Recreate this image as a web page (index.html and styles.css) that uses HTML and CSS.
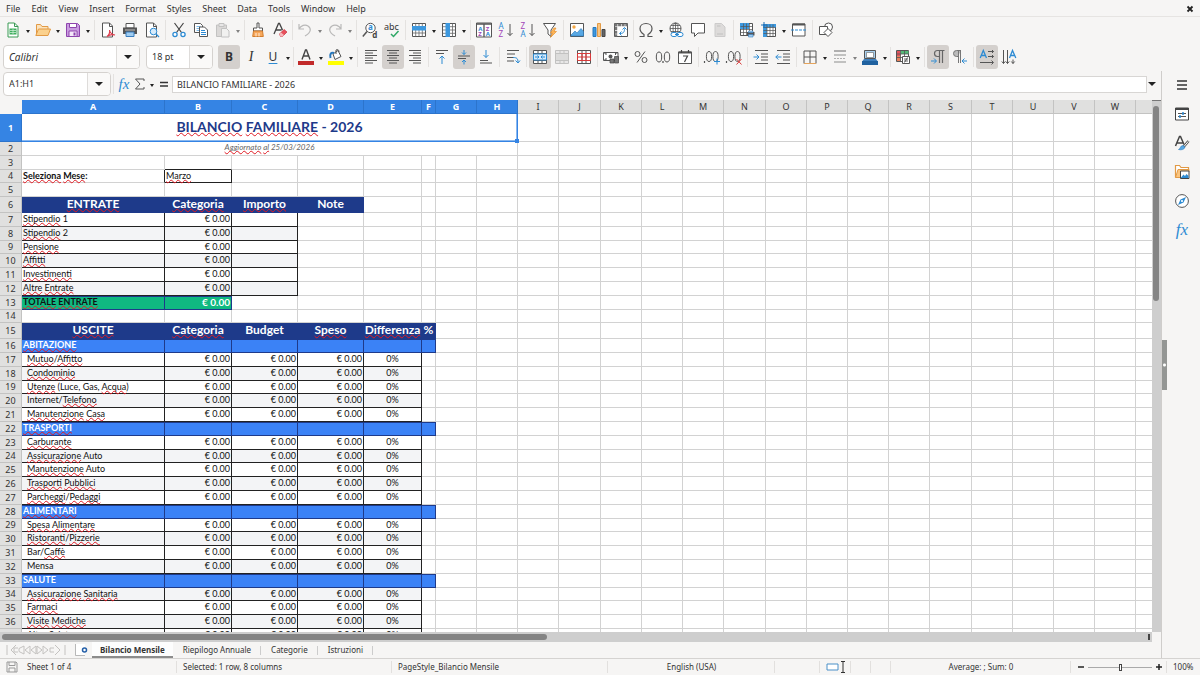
FILE: index.html
```html
<!DOCTYPE html>
<html lang="en">
<head>
<meta charset="utf-8">
<title>Bilancio Familiare</title>
<link rel="stylesheet" href="styles.css">
</head>
<body>
<nav class="menubar">
  <button>File</button><button>Edit</button><button>View</button><button>Insert</button><button>Format</button><button>Styles</button><button>Sheet</button><button>Data</button><button>Tools</button><button>Window</button><button>Help</button>
  <button class="close" aria-label="Close"><svg class="close-icon" viewBox="0 0 8 8"><path d="M1.500 1.500l5 5M6.500 1.500l-5 5" stroke="#222" stroke-width="1.800"/></svg></button>
</nav>

<div class="toolbar" role="toolbar" aria-label="Standard">
  <button class="tool" aria-label="New"><svg viewBox="0 0 16 16"><path d="M3 1h6.500l3.500 3.500V15H3z" fill="#fff" stroke="#3a9a55"/><path d="M9.500 1v3.500H13" fill="none" stroke="#3a9a55"/><path d="M4.500 6.500h7v6h-7z" fill="#3fae5f"/><path d="M5 8.500h6M5 10.500h6M8 7v5" stroke="#d9f2df" stroke-width=".7"/></svg></button><button class="drop" aria-label="New options"></button>
  <button class="tool" aria-label="Open"><svg viewBox="0 0 16 16"><path d="M1.500 13V2.500h4l1.500 2h6V7" fill="#fbe3bd" stroke="#e29a45"/><path d="M.8 13.500L3.500 7H15.500l-2.500 6.500z" fill="#fbd18d" stroke="#e29a45"/></svg></button><button class="drop" aria-label="Open options"></button>
  <button class="tool" aria-label="Save"><svg viewBox="0 0 16 16"><path d="M1.500 1.500h11l2 2v11h-13z" fill="#c99be0" stroke="#8e44ad"/><path d="M4.500 1.500h7v4h-7z" fill="#fff" stroke="#8e44ad"/><path d="M4 9h8v5.500H4z" fill="#f4e8fa" stroke="#8e44ad"/><path d="M8.500 10.500h2v3h-2z" fill="#8e44ad"/></svg></button><button class="drop" aria-label="Save options"></button>
  <span class="sep"></span>
  <button class="tool" aria-label="Export as PDF"><svg viewBox="0 0 16 16"><path d="M2.500 1h7l3 3v11h-10z" fill="#fff" stroke="#555"/><path d="M9.500 1v3.500h3" fill="none" stroke="#555"/><path d="M7 14.500c2-1.500 3-4 2.500-6.500.5 3 2.500 4.500 5.500 5-3-.8-6 0-8 1.500z" fill="#fff" stroke="#df3b4b" stroke-width="1.100"/></svg></button>
  <button class="tool" aria-label="Print"><svg viewBox="0 0 16 16"><path d="M4 1.500h8V6H4z" fill="#fff" stroke="#555"/><path d="M1 5.500h14V12H1z" fill="#555"/><path d="M3 8h10" stroke="#ddd" stroke-width=".8"/><path d="M4 10h8v4.500H4z" fill="#9fcdf2" stroke="#3a7fc0"/></svg></button>
  <button class="tool" aria-label="Print Preview"><svg viewBox="0 0 16 16"><path d="M2.500 1h7l3 3v11h-10z" fill="#fff" stroke="#555"/><path d="M9.500 1v3.500h3" fill="none" stroke="#555"/><circle cx="9.500" cy="9.500" r="3.300" fill="#d7ebfb" stroke="#2d8bd3"/><path d="M12 12l3 3" stroke="#2d8bd3" stroke-width="1.300"/></svg></button>
  <span class="sep"></span>
  <button class="tool" aria-label="Cut"><svg viewBox="0 0 16 16"><path d="M3.500 1l7 9.500M12.500 1l-7 9.500" stroke="#444" stroke-width="1.200"/><circle cx="4" cy="12.500" r="2.100" fill="#fff" stroke="#2d8bd3" stroke-width="1.300"/><circle cx="12" cy="12.500" r="2.100" fill="#fff" stroke="#2d8bd3" stroke-width="1.300"/></svg></button>
  <button class="tool" aria-label="Copy"><svg viewBox="0 0 16 16"><path d="M1.500 1.500h6l2 2v7h-8z" fill="#fff" stroke="#555"/><path d="M3.500 4.500h4M3.500 6.500h4M3.500 8.500h3" stroke="#5aa6e0" stroke-width=".8"/><path d="M6.500 5h5l3 3v6.500h-8z" fill="#fff" stroke="#555"/><path d="M8 8.500h4M8 10.500h5M8 12.500h5" stroke="#2d8bd3"/></svg></button>
  <button class="tool faded" aria-label="Paste"><svg viewBox="0 0 16 16"><path d="M1.500 3h10v11.500h-10z" fill="#c4c2c0" stroke="#999"/><path d="M4 1.500h5v3H4z" fill="#ddd" stroke="#999"/><path d="M6.500 6.500h5l2.500 2.500v6H6.500z" fill="#eee" stroke="#999"/></svg></button><button class="drop faded" aria-label="Paste options"></button>
  <span class="sep"></span>
  <button class="tool" aria-label="Clone Formatting"><svg viewBox="0 0 16 16"><path d="M7 1h2v5h3.500v3h-9V6H7z" fill="#fff" stroke="#555"/><path d="M3.500 9h9l.8 5.500H2.700z" fill="#f7a85c" stroke="#d37d2c"/><path d="M6 11v3.500M9 11v3.500" stroke="#fff" stroke-width=".8"/></svg></button>
  <button class="tool" aria-label="Clear Direct Formatting"><svg viewBox="0 0 16 16"><path d="M2 12L6.500 1.500h1L10.500 8M4 8h5.500" fill="none" stroke="#444" stroke-width="1.300"/><path d="M7.500 12l4.500-4.500 3 2.500-4.500 4.500H8.500z" fill="#e8505b" stroke="#c9303f" stroke-width=".7"/><path d="M7.500 12l1.500-1.500 3 2.500-1.500 1.500h-2z" fill="#f8b9bd"/></svg></button>
  <span class="sep slim"></span>
  <button class="tool faded" aria-label="Undo"><svg viewBox="0 0 16 16"><path d="M2 2v5h5M2 7c2-3.500 6-5 9-3s4 6-3 10" fill="none" stroke="#888" stroke-width="1.200"/></svg></button><button class="drop faded" aria-label="Undo options"></button>
  <button class="tool faded" aria-label="Redo"><svg viewBox="0 0 16 16"><path d="M14 2v5H9M14 7c-2-3.500-6-5-9-3s-4 6 3 10" fill="none" stroke="#888" stroke-width="1.200"/></svg></button><button class="drop faded" aria-label="Redo options"></button>
  <span class="sep"></span>
  <button class="tool" aria-label="Find and Replace"><svg viewBox="0 0 16 16"><circle cx="8.500" cy="6" r="4.700" fill="#fff" stroke="#555"/><path d="M5 9.500L.8 14.500" stroke="#555" stroke-width="1.500"/><text x="6" y="8.400" font-size="8" font-weight="bold" fill="#2d8bd3">a</text><text x="10.200" y="15.500" font-size="8" font-weight="bold" fill="#444">d</text></svg></button>
  <button class="tool" aria-label="Spelling"><svg viewBox="0 0 16 16"><text x="0" y="8" font-size="9" fill="#333">abc</text><path d="M7 12l2.500 2.500L14.500 9" fill="none" stroke="#2fa866" stroke-width="1.500"/></svg></button>
  <span class="sep"></span>
  <button class="tool" aria-label="Row"><svg viewBox="0 0 16 16"><path d="M1.500 1.500h13v13h-13z" fill="#fff" stroke="#555"/><path d="M4.700 1.500v13M8 1.500v13M11.300 1.500v13M1.500 11h13" stroke="#666" stroke-width=".8"/><path d="M1 4h14v4.500H1z" fill="#3d98de"/></svg></button><button class="drop" aria-label="Row options"></button>
  <button class="tool" aria-label="Column"><svg viewBox="0 0 16 16"><path d="M1.500 1.500h13v13h-13z" fill="#fff" stroke="#555"/><path d="M1.500 4.700h13M1.500 8h13M1.500 11.300h13M11.500 1.500v13" stroke="#666" stroke-width=".8"/><path d="M4.500 1H9v14H4.500z" fill="#3d98de"/></svg></button><button class="drop" aria-label="Column options"></button>
  <span class="sep"></span>
  <button class="tool" aria-label="Sort"><svg viewBox="0 0 16 16"><path d="M.5 1h15v14H.5z" fill="#fff" stroke="#555"/><path d="M.5 2h15M8 2v13" stroke="#555" stroke-width="1.300"/><g font-size="6" font-weight="bold"><text x="2.200" y="8.500" fill="#2d8bd3">A</text><text x="2.200" y="14.200" fill="#a245b8">Z</text><text x="9.800" y="8.500" fill="#a245b8">Z</text><text x="9.800" y="14.200" fill="#2d8bd3">A</text></g></svg></button>
  <button class="tool" aria-label="Sort Ascending"><svg viewBox="0 0 16 16"><g font-size="8"><text x="0.500" y="7" fill="#2d8bd3">A</text><text x="0.500" y="15" fill="#a245b8">Z</text></g><path d="M12 2v11.500M9.500 11l2.500 2.500L14.500 11" fill="none" stroke="#555"/></svg></button>
  <button class="tool" aria-label="Sort Descending"><svg viewBox="0 0 16 16"><g font-size="8"><text x="0.500" y="7" fill="#a245b8">Z</text><text x="0.500" y="15" fill="#2d8bd3">A</text></g><path d="M12 2v11.500M9.500 11l2.500 2.500L14.500 11" fill="none" stroke="#555"/></svg></button>
  <button class="tool" aria-label="AutoFilter"><svg viewBox="0 0 16 16"><path d="M1.500 1.500h12L9 8v6.500l-3-2.500V8z" fill="#fff" stroke="#555"/><path d="M12 6L8.500 11h2L8.500 15.500 14.500 9.500h-2.500L14 6z" fill="#fdb65b" stroke="#e58a1f" stroke-width=".6"/></svg></button>
  <span class="sep"></span>
  <button class="tool" aria-label="Insert Image"><svg viewBox="0 0 16 16"><path d="M1.500 1.500h13v13h-13z" fill="#fff" stroke="#555"/><circle cx="5" cy="5" r="1.700" fill="#f5a742"/><path d="M2 13l4-4 2 2 4-4.500 2.500 3V14H2z" fill="#58a8e4" stroke="#2878bd" stroke-width=".6"/></svg></button>
  <button class="tool" aria-label="Insert Chart"><svg viewBox="0 0 16 16"><path d="M2 5.500h3v9H2z" fill="#3d98de" stroke="#2878bd"/><path d="M6.500 1.500h3v13h-3z" fill="#fbc57f" stroke="#e29a45"/><path d="M11 7.500h3v7h-3z" fill="#666" stroke="#444"/></svg></button>
  <button class="tool" aria-label="Insert Pivot Table"><svg viewBox="0 0 16 16"><path d="M1.500 1.500h13v13h-13z" fill="#fff" stroke="#555"/><path d="M1.500 3h13M3 1.500v13" stroke="#777" stroke-width="2.400" stroke-dasharray="3 .6"/><path d="M7 11.500c4 0 4.500-2 4.500-5M9.500 7.500l2-2 2 2M8.500 9.500l-2 2 2 2" fill="none" stroke="#2d8bd3"/></svg></button>
  <span class="sep slim"></span>
  <button class="tool" aria-label="Special Character"><svg viewBox="0 0 16 16"><path d="M1.500 14.500H6v-2C3.500 11 2 9 2 6.500 2 3.500 4.500 1.500 8 1.500s6 2 6 5c0 2.500-1.500 4.500-4 6v2h4.500" fill="none" stroke="#555" stroke-width="1.200"/></svg></button><button class="drop" aria-label="Character options"></button>
  <button class="tool" aria-label="Insert Hyperlink"><svg viewBox="0 0 16 16"><circle cx="7.500" cy="6.500" r="5.500" fill="#fff" stroke="#555"/><path d="M2 6.500h11M7.500 1v11M3 3.500h9M3 9.500h9" stroke="#555" stroke-width=".8"/><ellipse cx="7.500" cy="6.500" rx="2.500" ry="5.500" fill="none" stroke="#555" stroke-width=".8"/><rect x="3" y="10.500" width="6" height="4" rx="2" fill="#fff" stroke="#2d8bd3"/><rect x="9" y="10.500" width="6" height="4" rx="2" fill="#fff" stroke="#2d8bd3"/><path d="M7 12.500h4" stroke="#2d8bd3"/></svg></button>
  <button class="tool" aria-label="Insert Comment"><svg viewBox="0 0 16 16"><path d="M1.500 1.500h13v9.500H8L4.500 14.500V11h-3z" fill="#fff" stroke="#555"/></svg></button>
  <button class="tool faded" aria-label="Headers and Footers"><svg viewBox="0 0 16 16"><path d="M3 1.500h6.500l3.500 3.500v9.500H3z" fill="#c9c7c5" stroke="#aaa"/><path d="M5 4h3.500M5 12h6" stroke="#999"/></svg></button>
  <span class="sep"></span>
  <button class="tool" aria-label="Define Print Area"><svg viewBox="0 0 16 16"><path d="M1.500 1.500h12v12h-12z" fill="#fff" stroke="#555"/><path d="M1 1h9v6H1z" fill="#3d98de"/><path d="M1.500 4.500h12M1.500 7.500h12M1.500 10.500h12M4.500 1.500v12M7.500 1.500v12M10.500 1.500v12" stroke="#555" stroke-width=".7"/><path d="M8 10h7.500v3.500H8z" fill="#555"/><path d="M9.500 9h4.500v1.500H9.500zM9.500 12.500h4.500v2.500H9.500z" fill="#9fcdf2" stroke="#3a7fc0" stroke-width=".6"/></svg></button>
  <button class="tool" aria-label="Freeze Rows and Columns"><svg viewBox="0 0 16 16"><path d="M2.500 2.500h12v12h-12z" fill="#fff" stroke="#555"/><path d="M2 2h13v3.500H6V15H2z" fill="#3d98de"/><path d="M2.500 5.500h12M2.500 8.500h12M2.500 11.500h12M6 2.500v12M9 2.500v12M12 2.500v12" stroke="#555" stroke-width=".7"/><path d="M0 3h6M3 0v6" stroke="#1f6fb5"/></svg></button><button class="drop" aria-label="Freeze options"></button>
  <button class="tool" aria-label="Split Window"><svg viewBox="0 0 16 16"><path d="M1.500 2h12.500v12H1.500z" fill="#fff" stroke="#555"/><path d="M1.500 2.500H14" stroke="#555" stroke-width="2"/><path d="M0 8h16" stroke="#2d8bd3" stroke-dasharray="3 1"/></svg></button>
  <span class="sep"></span>
  <button class="tool" aria-label="Draw Functions"><svg viewBox="0 0 16 16"><circle cx="10.500" cy="5" r="4" fill="#fff" stroke="#555"/><path d="M1.500 4.500h8v8h-8z" fill="#fff" stroke="#555"/><path d="M10 6.500l4 4-4 4-4-4z" fill="#fff" stroke="#555"/></svg></button>
</div>

<div class="toolbar formatting" role="toolbar" aria-label="Formatting">
  <div class="combo font-name"><input type="text" value="Calibri" aria-label="Font Name"><button aria-label="Show fonts"></button></div>
  <div class="combo font-size"><input type="text" value="18 pt" aria-label="Font Size"><button aria-label="Show sizes"></button></div>
  <button class="tool on letter bold" aria-label="Bold">B</button>
  <button class="tool letter italic" aria-label="Italic">I</button>
  <button class="tool letter under" aria-label="Underline">U</button><button class="drop" aria-label="Underline options"></button>
  <span class="sep slim"></span>
  <button class="tool" aria-label="Font Color"><svg viewBox="0 0 16 16"><path d="M4 10.500L7.500 1h1L12 10.500M5.200 7h5.500" fill="none" stroke="#444" stroke-width="1.400"/><path d="M0 12h16v4H0z" fill="#c22a2a"/></svg></button><button class="drop" aria-label="Font color options"></button>
  <button class="tool" aria-label="Highlighting"><svg viewBox="0 0 16 16"><path d="M5 5l5-3.500 3 6L7 10.500z" fill="#fff" stroke="#555"/><path d="M8 5V1c2-1 3 0 3 2" fill="none" stroke="#555"/><path d="M6 4C3 3 1.500 5 2.500 9" fill="none" stroke="#2878bd" stroke-width="2"/><path d="M0 12h16v4H0z" fill="#ffff00"/></svg></button><button class="drop" aria-label="Highlighting options"></button>
  <span class="sep"></span>
  <button class="tool" aria-label="Align Left"><svg viewBox="0 0 16 16"><path d="M2 1.500h12M2 4h8M2 6.500h12M2 9h8M2 11.500h12M2 14h8" stroke="#555"/></svg></button>
  <button class="tool on" aria-label="Center Horizontally"><svg viewBox="0 0 16 16"><path d="M2 1.500h12M4 4h8M2 6.500h12M4 9h8M2 11.500h12M4 14h8" stroke="#555"/></svg></button>
  <button class="tool" aria-label="Align Right"><svg viewBox="0 0 16 16"><path d="M2 1.500h12M6 4h8M2 6.500h12M6 9h8M2 11.500h12M6 14h8" stroke="#555"/></svg></button>
  <span class="sep"></span>
  <button class="tool" aria-label="Align Top"><svg viewBox="0 0 16 16"><path d="M2 1.500h12M2 4.500h8" stroke="#555"/><path d="M8 15V7M5.500 9.500L8 7l2.500 2.500" fill="none" stroke="#2d8bd3"/></svg></button>
  <button class="tool on" aria-label="Center Vertically"><svg viewBox="0 0 16 16"><path d="M2 7h12M2 9.500h8" stroke="#555"/><path d="M8 1v4.500M6 3.500l2 2 2-2M8 15.500V11M6 13l2-2 2 2" fill="none" stroke="#2d8bd3"/></svg></button>
  <button class="tool" aria-label="Align Bottom"><svg viewBox="0 0 16 16"><path d="M2 11.500h8M2 14h12" stroke="#555"/><path d="M8 1v7.500M5.500 6L8 8.500 10.500 6" fill="none" stroke="#2d8bd3"/></svg></button>
  <span class="sep"></span>
  <button class="tool" aria-label="Wrap Text"><svg viewBox="0 0 16 16"><path d="M2 1.500h12M2 5h8M2 8.500h7M2 12h7" stroke="#555"/><path d="M8 8.500c4 0 5 1 5 5M10.500 11.500l2.500 2.500 2-2.500" fill="none" stroke="#2d8bd3"/></svg></button>
  <span class="sep"></span>
  <button class="tool on" aria-label="Merge and Center"><svg viewBox="0 0 16 16"><path d="M1.500 1.500h13v13h-13z" fill="#fff" stroke="#555"/><path d="M6 1.500v13M10 1.500v13M1.500 4.500h13M1.500 11.500h13" stroke="#555"/><path d="M1.500 5h13v6h-13z" fill="#d7ebfb" stroke="#2d8bd3"/><path d="M3 8h4M9 8h4M5.500 6.500L7 8 5.500 9.500M10.500 6.500L9 8l1.500 1.500" fill="none" stroke="#2d8bd3"/></svg></button>
  <button class="tool faded" aria-label="Merge Cells"><svg viewBox="0 0 16 16"><path d="M1.500 1.500h13v13h-13z" fill="#ddd" stroke="#999"/><path d="M6 1.500v13M10 1.500v13M1.500 4.500h13M1.500 11.500h13" stroke="#999"/><path d="M2 5h12v6H2z" fill="#c8c8c8"/></svg></button>
  <button class="tool" aria-label="Unmerge Cells"><svg viewBox="0 0 16 16"><path d="M1.500 1.500h13v13h-13z" fill="#fff" stroke="#555"/><path d="M6 1.500v13M10 1.500v13M1.500 4.500h13M1.500 11.500h13" stroke="#555"/><path d="M1.500 4.500h13v7h-13zM6 4.500v7M10 4.500v7M1.500 8h13" fill="none" stroke="#d93a3a"/></svg></button>
  <span class="sep"></span>
  <button class="tool" aria-label="Format as Currency"><svg viewBox="0 0 16 16"><path d="M.5 3.500h14.500v8H.5z" fill="#fff" stroke="#555"/><circle cx="7.500" cy="7.500" r="2" fill="#555"/><path d="M1 4h2v2M14.500 4h-2v2M1 11h2V9" fill="none" stroke="#555"/><path d="M7 10h4v4H7zM11.500 7.500h4v6.500h-4z" fill="#777" stroke="#444" stroke-width=".7"/></svg></button><button class="drop" aria-label="Currency options"></button>
  <button class="tool" aria-label="Format as Percent"><svg viewBox="0 0 16 16"><circle cx="4.500" cy="5" r="2.500" fill="none" stroke="#555"/><circle cx="11.500" cy="11" r="2.500" fill="none" stroke="#555"/><path d="M12 2.500L4 13.500" stroke="#555"/></svg></button>
  <button class="tool" aria-label="Format as Number"><svg viewBox="0 0 16 16"><ellipse cx="4" cy="8" rx="2.700" ry="5" fill="none" stroke="#555"/><ellipse cx="12" cy="8" rx="2.700" ry="5" fill="none" stroke="#555"/><path d="M8 12v2" stroke="#555" stroke-width="1.300"/></svg></button>
  <button class="tool" aria-label="Format as Date"><svg viewBox="0 0 16 16"><path d="M1.500 3h13v11.500h-13z" fill="#fff" stroke="#555"/><path d="M1.500 3.500h13" stroke="#555" stroke-width="2"/><path d="M4.500 1v3M11.500 1v3M6 7h4.500L7.500 13" fill="none" stroke="#444" stroke-width="1.200"/></svg></button>
  <span class="sep"></span>
  <button class="tool" aria-label="Add Decimal Place"><svg viewBox="0 0 16 16"><path d="M.5 12v2" stroke="#555" stroke-width="1.200"/><ellipse cx="5" cy="7.500" rx="2.600" ry="5" fill="none" stroke="#555"/><ellipse cx="11.500" cy="7.500" rx="2.600" ry="5" fill="none" stroke="#555"/><path d="M13 9.500v6M10 12.500h6" stroke="#2d8bd3"/></svg></button>
  <button class="tool" aria-label="Delete Decimal Place"><svg viewBox="0 0 16 16"><path d="M.5 12v2" stroke="#555" stroke-width="1.200"/><ellipse cx="5" cy="7.500" rx="2.600" ry="5" fill="none" stroke="#555"/><ellipse cx="11.500" cy="7.500" rx="2.600" ry="5" fill="none" stroke="#555"/><path d="M10.500 10l5 5.500M15.500 10l-5 5.500" stroke="#d93a3a"/></svg></button>
  <span class="sep"></span>
  <button class="tool" aria-label="Increase Indent"><svg viewBox="0 0 16 16"><path d="M2 1.500h13M8 5h7M8 8h7M8 11h7M2 14.500h13" stroke="#555"/><path d="M.5 8H6M3.500 5.500L6 8l-2.500 2.500" fill="none" stroke="#2d8bd3"/></svg></button>
  <button class="tool" aria-label="Decrease Indent"><svg viewBox="0 0 16 16"><path d="M2 1.500h13M8 5h7M8 8h7M8 11h7M2 14.500h13" stroke="#555"/><path d="M.8 8H6.500M3.300 5.500L.8 8l2.500 2.500" fill="none" stroke="#2d8bd3"/></svg></button>
  <span class="sep"></span>
  <button class="tool" aria-label="Borders"><svg viewBox="0 0 16 16"><path d="M2 14.500V2h12v12.500M8 2v12M2 8h12" fill="none" stroke="#555"/><path d="M2 14.500h12" stroke="#e5a45c"/></svg></button><button class="drop" aria-label="Border options"></button>
  <button class="tool faded" aria-label="Border Style"><svg viewBox="0 0 16 16"><path d="M2 2h12" stroke="#777" stroke-width="2"/><path d="M2 6h12" stroke="#777" stroke-width="1.500"/><path d="M2 9.500h12" stroke="#777" stroke-dasharray="2 1"/><path d="M2 13h12" stroke="#777" stroke-width="1.500"/></svg></button><button class="drop faded" aria-label="Border style options"></button>
  <button class="tool" aria-label="Border Color"><svg viewBox="0 0 16 16"><path d="M2.500 1.500h11v8h-11z" fill="#a8d1f0" stroke="#555"/><path d="M4.500 3.500h7v5h-7z" fill="#fff" stroke="#777" stroke-width=".7"/><path d="M0 12h16v4H0z" fill="#2062a0"/><path d="M2 10h12l1.500 2H.5z" fill="#3d7fbd"/></svg></button><button class="drop" aria-label="Border color options"></button>
  <span class="sep slim"></span>
  <button class="tool" aria-label="Conditional Formatting"><svg viewBox="0 0 16 16"><path d="M1.500 1.500h12v11h-12z" fill="#fff" stroke="#555"/><path d="M2 2h3.500v5H2z" fill="#e0525b"/><path d="M6 2h7.500v3H6z" fill="#54b877"/><path d="M2 7h3.500v5H2z" fill="#e8805b"/><path d="M1.500 5h12M1.500 8.500h12M5.500 1.500v11M9.500 1.500v11" stroke="#555" stroke-width=".8"/><path d="M7.500 7.500h7v7h-7z" fill="#fff" stroke="#555"/><path d="M9 10h4M9 12h4M12.500 8.500l-3 5" stroke="#444" stroke-width=".8"/></svg></button><button class="drop" aria-label="Conditional options"></button>
  <span class="sep"></span>
  <button class="tool on" aria-label="Left-To-Right"><svg viewBox="0 0 16 16"><path d="M14.500 1.500H7.500a3 3 0 000 6h2M9.500 1.500V14M12.500 1.500V14" fill="none" stroke="#666" stroke-width="1.200"/><path d="M1 12h5M4 9.500L6.500 12 4 14.500" fill="none" stroke="#2d8bd3"/></svg></button>
  <button class="tool" aria-label="Right-To-Left"><svg viewBox="0 0 16 16"><path d="M9 1.500H4.500a3 3 0 000 6H6M6.500 1.500V14M8.500 1.500V14" fill="#bbb" stroke="#777"/><path d="M10 12h5M12.500 9.500L10 12l2.500 2.500" fill="none" stroke="#2d8bd3"/></svg></button>
  <span class="sep"></span>
  <button class="tool on" aria-label="Text direction from left to right"><svg viewBox="0 0 16 16"><path d="M1.200 9L4.300 1.500 7.500 9M2.300 6.500h4" fill="none" stroke="#2d8bd3" stroke-width="1.300"/><path d="M9 2.500h5.500M9 7.500h5.500M1 13.500h13M13 1l1.500 1.500L13 4M13 6l1.500 1.500L13 9M12.500 11.500l2 2-2 2" fill="none" stroke="#555"/></svg></button>
  <button class="tool" aria-label="Text direction from top to bottom"><svg viewBox="0 0 16 16"><path d="M8.500 9l3-7.500L14.800 9M9.500 6.500h4" fill="none" stroke="#2d8bd3" stroke-width="1.300"/><path d="M2.500 1v13.500M6.500 1v13.500M12 10.500v4M.8 12.500l1.700 2 1.700-2M4.800 12.500l1.700 2 1.700-2M10.300 12.500l1.700 2 1.700-2" fill="none" stroke="#555"/></svg></button>
</div>

<div class="workspace">
  <main class="document">
    <div class="formula-bar">
      <div class="combo name-box"><input type="text" value="A1:H1" aria-label="Name Box"><button aria-label="Show names"></button></div>
      <span class="sep"></span>
      <button class="mini fx" aria-label="Function Wizard"><i>fx</i></button>
      <button class="mini" aria-label="Select Function"><svg viewBox="0 0 12 12"><path d="M10 3V1H1.500l4.500 5-4.500 5H10V9" fill="none" stroke="#555"/></svg></button><button class="drop" aria-label="Function options"></button>
      <button class="mini" aria-label="Formula"><svg viewBox="0 0 12 12"><path d="M2 4.500h8M2 8h8" stroke="#333" stroke-width="1.500"/></svg></button>
      <input class="formula" type="text" value="BILANCIO FAMILIARE - 2026" aria-label="Input line">
      <button class="drop expand" aria-label="Expand Formula Bar"></button>
    </div>
    <div class="sheet-area">
      <div class="grid-view">
        <table class="sheet">
          <colgroup id="columns"></colgroup>
          <thead><tr id="column-heads"></tr></thead>
          <tbody id="rows"></tbody>
        </table>
      </div>
      <div class="scroll-v"><div class="thumb"></div></div>
    </div>
    <div class="scroll-h"><div class="thumb"></div><span class="split-mark"></span></div>
    <div class="tabs">
      <svg class="tab-nav" viewBox="0 0 60 12"><g fill="none" stroke="#c4c2c0"><path d="M1 1v10M10 1L5 6l5 5M12 4h-4v4h4M13 4.500L18 2v8l-5-2.500zM24 2l-5 4 5 4zM30 2l-5 4 5 4zM31 2l5 4-5 4zM37 2l5 4-5 4zM48 4h-4v4h4M49 1l5 5-5 5M59 1v10"/></g></svg>
      <button class="add-sheet" aria-label="Add Sheet"><svg viewBox="0 0 14 12"><path d="M1 0h10v12H1z" fill="#fff"/><path d="M1.500 0v11.500H11" stroke="#999" fill="none" stroke-width=".7"/><circle cx="10.500" cy="6" r="2" fill="#fff" stroke="#245fa8" stroke-width="1.500"/></svg></button>
      <button class="tab active">Bilancio Mensile</button>
      <button class="tab">Riepilogo Annuale</button>
      <button class="tab">Categorie</button>
      <button class="tab">Istruzioni</button>
    </div>
  </main>
  <div class="split-handle"></div>
  <aside class="sidebar">
    <button aria-label="Sidebar Settings"><svg viewBox="0 0 16 16"><path d="M3 4h10M3 8h10M3 12h10" stroke="#333" stroke-width="1.500"/></svg></button>
    <button aria-label="Properties"><svg viewBox="0 0 16 16"><path d="M1.500 2h13v12h-13z" fill="#fff" stroke="#444"/><path d="M1.500 3h13" stroke="#444" stroke-width="2"/><path d="M4 7.500h8M4 10.500h8" stroke="#555"/><path d="M9 6v3M6 9v3" stroke="#2d8bd3" stroke-width="1.500"/></svg></button>
    <button aria-label="Styles"><svg viewBox="0 0 16 16"><path d="M1.500 11L5.500 1.500h1L10 9.500M3 8h6" fill="none" stroke="#444" stroke-width="1.500"/><path d="M14.500 6L9.500 12" stroke="#555" stroke-width="2.600"/><path d="M14.300 6.300L10 11.500" stroke="#fff"/><path d="M9 10.500c-3 0-2 3-4.500 4 3 .8 6 0 6.500-2.500z" fill="#58a8e4" stroke="#2878bd" stroke-width=".6"/></svg></button>
    <button aria-label="Gallery"><svg viewBox="0 0 16 16"><path d="M1.500 13.500v-12h4l1.500 2h7.500v3" fill="#fff" stroke="#e29a45" stroke-width="1.200"/><path d="M1.500 13.500L4 5.500h11v2L6 13.500z" fill="#fbc57f" stroke="#e29a45"/><path d="M6.500 7h8.500v7.500H6.500z" fill="#fff" stroke="#444"/><path d="M7 13.500l2.500-3 1.500 1.500 1.500-2 2 2v2H7z" fill="#2d8bd3"/></svg></button>
    <button aria-label="Navigator"><svg viewBox="0 0 16 16"><circle cx="8" cy="8" r="6.400" fill="#fff" stroke="#555"/><path d="M12 4L9.500 9.500 4 12l2.500-5.500z" fill="#2d8bd3"/><circle cx="8" cy="8" r="1.100" fill="#fff"/></svg></button>
    <button class="fx big" aria-label="Functions"><i>fx</i></button>
  </aside>
</div>

<footer class="statusbar">
  <span class="cell doc-state"><svg viewBox="0 0 12 12"><path d="M1 1h9l1 1v9H1zM3 1v3.500h6V1M3 11V7h6v4" fill="none" stroke="#999"/></svg>Sheet 1 of 4</span>
  <span class="cell selection">Selected: 1 row, 8 columns</span>
  <span class="cell page-style">PageStyle_Bilancio Mensile</span>
  <span class="cell language">English (USA)</span>
  <span class="cell gap"></span>
  <span class="cell insert-mode"><svg viewBox="0 0 22 12"><path d="M1 3h11v6H1z" fill="#fff" stroke="#4a90c8"/><path d="M15 .5h4M15 11.500h4M17 .5v11" stroke="#333" fill="none"/></svg></span>
  <span class="cell blank"></span>
  <span class="cell blank"></span>
  <span class="cell summary">Average: ; Sum: 0</span>
  <span class="cell zoom"><button aria-label="Zoom Out"><svg viewBox="0 0 8 8"><path d="M1 4h6" stroke="#222" stroke-width="1.500"/></svg></button><input type="range" min="0" max="100" value="50" aria-label="Zoom"><button aria-label="Zoom In"><svg viewBox="0 0 8 8"><path d="M1 4h6M4 1v6" stroke="#222" stroke-width="1.500"/></svg></button></span>
  <span class="cell percent">100%</span>
</footer>
<script src="script.js"></script>
</body>
</html>
```
FILE: styles.css
```css
* { box-sizing: border-box; }

:root {
  --chrome: #f6f5f4;
  --line: #dedcda;
  --pressed: #d4d0cd;
  --text: #333;
  --grid: #d2d2d2;
  --blue: #3584e4;
  --navy: #1e3a8a;
}

body {
  display: flex;
  flex-direction: column;
  height: 100vh;
  margin: 0;
  overflow: hidden;
  background: var(--chrome);
  color: var(--text);
  font: 9px/12px "Noto Sans", sans-serif;
}

button, input { font: inherit; color: inherit; }
button { padding: 0; border: 0; background: none; }
input { min-width: 0; outline: 0; }
svg { display: block; overflow: visible; font-family: "Noto Sans", sans-serif; }

.menubar {
  display: flex;
  flex: none;
  gap: 11px;
  height: 17px;
  padding: 1px 6px 0;
  border-bottom: 1px solid #e6e4e2;
}
.menubar .close { margin-left: auto; }
.close-icon { width: 8px; height: 8px; }

.toolbar {
  display: flex;
  flex: none;
  align-items: center;
  height: 26px;
  padding-left: 2px;
}
.toolbar.formatting { height: 28px; padding-left: 3px; }
.tool {
  display: grid;
  flex: none;
  place-items: center;
  width: 22px;
  height: 24px;
  border-radius: 3px;
}
.tool svg { width: 16px; height: 16px; }
.tool.on { background: var(--pressed); }
.faded { opacity: 0.55; }
.letter { font-size: 12px; line-height: 16px; }
.letter.bold { font-weight: 700; }
.letter.italic { font-family: "Liberation Serif", serif; font-style: italic; font-size: 14px; }
.letter.under { text-decoration: underline #2d8bd3; text-underline-offset: 2px; }

.drop { flex: none; width: 8px; height: 16px; }
.drop::before, .combo button::before {
  content: "";
  display: block;
  width: 0;
  margin: 2px auto 0;
  border: 2px solid transparent;
  border-top: 3px solid #222;
  border-bottom: 0;
}
.combo button::before { border-width: 4px 4px 0; margin-top: 0; }

.sep {
  flex: none;
  width: 5px;
  height: 20px;
  background: linear-gradient(#e4e2e0, #e4e2e0) center / 1px 100% no-repeat;
}
.sep.slim { width: 3px; }

.combo {
  display: flex;
  flex: none;
  height: 24px;
  border: 1px solid #d5d2cf;
  border-radius: 4px;
  background: #fff;
  overflow: hidden;
}
.combo input { flex: 1; padding: 0 5px; border: 0; background: none; }
.combo button { width: 23px; border-left: 1px solid #dedcda; background: #faf9f8; }
.font-name { width: 137px; margin-right: 6px; }
.font-name input { font-size: 10px; font-style: italic; }
.font-size { width: 67px; margin-right: 5px; }
.name-box { width: 108px; }

.workspace { display: flex; flex: 1; min-height: 0; }
.document {
  display: flex;
  flex: 1;
  flex-direction: column;
  min-width: 0;
  border-right: 1px solid #cfcdcb;
}
.formula-bar {
  display: flex;
  flex: none;
  align-items: center;
  height: 29px;
  padding: 0 4px 3px 3px;
}
.mini { display: grid; flex: none; place-items: center; width: 16px; height: 20px; }
.mini svg { width: 12px; height: 12px; }
.fx { color: #2d8bd3; font: 15px/16px "Liberation Serif", serif; }
.big { font-size: 17px; }
.formula {
  flex: 1;
  height: 17px;
  padding: 0 4px;
  border: 1px solid #d8d6d4;
  background: #fff;
}
.expand { width: 10px; }
.expand::before { border-width: 4px 4px 0; margin-top: 0; }

.sheet-area { display: flex; flex: 1; min-height: 0; }
.grid-view { flex: 1; min-width: 0; overflow: hidden; background: #fff; }

.sheet { width: 0; table-layout: fixed; border-collapse: separate; border-spacing: 0; }
.c-head { width: 22px; }
.c-A { width: 143px; }
.c-B { width: 67px; }
.c-C, .c-D { width: 66px; }
.c-E { width: 58px; }
.c-F { width: 14px; }
.c-std { width: 41px; }
.c-wide { width: 42px; }

.sheet tr { height: 14px; }
.sheet tbody tr:nth-child(5n + 4) { height: 13px; }
.sheet tbody tr.r-title { height: 28px; }
.sheet tbody tr.r-head { height: 16px; }

.sheet th {
  padding: 0;
  border: 0 solid #c3c3c2;
  border-width: 0 1px 1px 0;
  background: #e0e0df;
  font-weight: 400;
  line-height: 12px;
  white-space: nowrap;
  overflow: hidden;
}
.sheet th.corner { background: var(--chrome); border-color: var(--chrome); }
.sheet th.sel { background: var(--blue); border-color: #2c74cc; color: #fff; font-weight: 700; }

.sheet td {
  padding: 0 1px;
  border: 0 solid var(--grid);
  border-width: 0 1px 1px 0;
  color: #111;
  font: 9px/11px Lato, sans-serif;
  vertical-align: top;
  white-space: nowrap;
}
.sheet td.title {
  position: relative;
  border-color: var(--blue);
  box-shadow: inset -1px -1px 0 #8ab8ef;
  color: var(--navy);
  font: 700 14px/26px Lato, sans-serif;
  text-align: center;
}
.title::after {
  content: "";
  position: absolute;
  right: -2px;
  bottom: -2px;
  width: 4px;
  height: 4px;
  background: var(--blue);
}
.sheet td.updated { color: #666; font-size: 8px; font-style: italic; text-align: center; }
.sheet td.strong { font-weight: 700; }
.sheet td.box, .sheet td.edge-b { border-bottom-color: #222; }
.sheet td.box, .sheet td.edge-r { border-right-color: #222; }
.sheet td.stripe { background: #f3f4f6; }
.sheet td.num { text-align: right; }
.sheet td.mid { text-align: center; }
.sheet td.item { padding-left: 5px; }
.sheet td.head {
  padding: 0;
  border-color: var(--navy);
  background: var(--navy);
  color: #fff;
  font-size: 12px;
  font-weight: 700;
  line-height: 14px;
  text-align: center;
}
.sheet td.group, .sheet td.total { border-color: var(--navy); box-shadow: inset 0 1px 0 var(--navy); font-weight: 700; line-height: 12px; }
.sheet td.group { background: #3b82f6; color: #fff; }
.sheet td.total { background: #10b981; }
.sheet td.total.num { color: #fff; font-size: 10px; }
.typo { text-decoration: underline wavy #e01b24 1px; text-decoration-skip-ink: none; text-underline-offset: 0; }

.scroll-v { width: 9px; padding: 5px 2px 0 1px; background: #cecece; border-top: 1px solid #777; }
.scroll-v .thumb { height: 37%; border-radius: 3px; background: #848484; }
.scroll-h {
  display: flex;
  flex: none;
  justify-content: space-between;
  align-items: center;
  height: 10px;
  margin-right: 9px;
  padding: 0 2px;
  background: #cecece;
}
.scroll-h .thumb { width: 47.5%; height: 6px; border-radius: 3px; background: #848484; }
.split-mark { width: 2px; height: 6px; background: #444; }

.tabs { display: flex; flex: none; align-items: center; height: 16px; padding-left: 6px; font-size: 8px; }
.tab-nav { flex: none; width: 60px; height: 12px; margin-right: 8px; }
.add-sheet { margin-right: 4px; }
.add-sheet svg { width: 14px; height: 12px; }
.tab { height: 16px; padding: 0 10px; position: relative; }
.tab + .tab:not(.active)::after {
  content: "";
  position: absolute;
  right: 0;
  top: 4px;
  width: 1px;
  height: 9px;
  background: #ccc;
}
.tab.active { padding: 0 8px; box-shadow: inset 0 -2px 0 #8c8c8c; background: #fdfdfd; font-weight: 700; }

.split-handle {
  align-self: center;
  flex: none;
  width: 5px;
  height: 50px;
  background: radial-gradient(circle, #fff 1px, transparent 2px), #949694;
}
.sidebar { display: flex; flex: none; flex-direction: column; gap: 13px; width: 33px; padding: 6px 0 0 7px; }
.sidebar button { width: 16px; height: 16px; }

.statusbar {
  display: flex;
  flex: none;
  height: 17px;
  border-top: 1px solid #d5d3d1;
  font-size: 8px;
  line-height: 16px;
}
.cell {
  flex: none;
  padding-left: 6px;
  background: linear-gradient(#e2e0de, #e2e0de) right center / 1px 12px no-repeat;
  white-space: nowrap;
}
.doc-state { display: flex; align-items: center; gap: 9px; width: 177px; }
.doc-state svg { width: 12px; height: 12px; }
.selection { width: 215px; }
.page-style { width: 216px; }
.language { width: 167px; padding: 0; text-align: center; }
.gap { width: 45px; }
.insert-mode { display: flex; align-items: center; width: 31px; }
.insert-mode svg { width: 22px; height: 12px; }
.blank { width: 20px; }
.summary { flex: 1; padding: 0; text-align: center; }
.zoom { display: flex; align-items: center; width: 96px; padding-right: 4px; }
.zoom svg { width: 8px; height: 8px; }
.zoom input {
  flex: 1;
  height: 10px;
  margin: 0 3px;
  appearance: none;
  background: linear-gradient(#aaa, #aaa) center / 100% 1px no-repeat;
}
.zoom input::-webkit-slider-thumb {
  appearance: none;
  width: 3px;
  height: 7px;
  border: 1px solid #444;
  background: #fff;
}
.percent { width: 33px; background: none; }
```
FILE: script.js
```js
const LETTERS = 'ABCDEFGHIJKLMNOPQRSTUVWXYZ'.split('');
const OWN_WIDTH = 'ABCDEF';
const WIDE = 'JNS';
const SELECTED = 'ABCDEFGH';

// Words between underscores carry the spelling mark.
const income = ['_Stipendio_ 1', '_Stipendio_ 2', '_Pensione_', '_Affitti_', '_Investimenti_', '_Altre_ _Entrate_'];
const expenses = [
  ['_ABITAZIONE_', '_Mutuo_/_Affitto_', '_Condominio_', '_Utenze_ (Luce, Gas, _Acqua_)', 'Internet/_Telefono_', '_Manutenzione_ _Casa_'],
  ['_TRASPORTI_', '_Carburante_', '_Assicurazione_ Auto', '_Manutenzione_ Auto', '_Trasporti_ _Pubblici_', '_Parcheggi_/_Pedaggi_'],
  ['_ALIMENTARI_', '_Spesa_ _Alimentare_', '_Ristoranti_/_Pizzerie_', 'Bar/_Caffè_', 'Mensa'],
  ['SALUTE', '_Assicurazione_ _Sanitaria_', '_Farmaci_', '_Visite_ _Mediche_', 'Altro Salute']
];

const rows = [];
const row = (cells, kind = '') => rows.push({ cells, kind });
const cell = (text, cls = '', span = 1) => ({ text, cls, span });

row([cell('_BILANCIO_ _FAMILIARE_ - 2026', 'title', 8)], 'r-title');
row([cell('_Aggiornato_ _al_ 25/03/2026', 'updated', 8)]);
row([cell(''), cell('', 'edge-b')]);
row([cell('_Seleziona_ _Mese_:', 'strong edge-r'), cell('_Marzo_', 'box')]);
row([]);
row(['_ENTRATE_', '_Categoria_', '_Importo_', 'Note'].map(t => cell(t, 'head')), 'r-head');
income.forEach(name => {
  const stripe = (rows.length + 1) % 2 ? '' : ' stripe';
  row([cell(name, 'box' + stripe), cell('€ 0.00', 'box num' + stripe), cell('', 'box' + stripe)]);
});
row([cell('_TOTALE_ _ENTRATE_', 'total'), cell('€ 0.00', 'total num')]);
row([]);
row(['_USCITE_', '_Categoria_', 'Budget', '_Speso_', '_Differenza_', '%'].map(t => cell(t, 'head')), 'r-head');
expenses.forEach(([group, ...items]) => {
  row([cell(group, 'group'), ...Array.from({ length: 5 }, () => cell('', 'group'))]);
  items.forEach(name => {
    const stripe = (rows.length + 1) % 2 ? '' : ' stripe';
    row([
      cell(name, 'box item' + stripe),
      ...Array.from({ length: 3 }, () => cell('€ 0.00', 'box num' + stripe)),
      cell('0%', 'box mid' + stripe)
    ]);
  });
});

const mark = text => text.replace(/_([^_]+)_/g, '<span class="typo">$1</span>');

document.getElementById('columns').innerHTML = '<col class="c-head">' + LETTERS.map(l =>
  `<col class="${OWN_WIDTH.includes(l) ? 'c-' + l : WIDE.includes(l) ? 'c-wide' : 'c-std'}">`).join('');

document.getElementById('column-heads').innerHTML = '<th class="corner"></th>' + LETTERS.map(l =>
  `<th scope="col"${SELECTED.includes(l) ? ' class="sel"' : ''}>${l}</th>`).join('');

document.getElementById('rows').innerHTML = rows.map(({ cells, kind }, i) => {
  const used = cells.reduce((n, c) => n + c.span, 0);
  const filled = cells.map(c => `<td class="${c.cls}"${c.span > 1 ? ` colspan="${c.span}"` : ''}>${mark(c.text)}</td>`).join('');
  return `<tr class="${kind}"><th scope="row"${i === 0 ? ' class="sel"' : ''}>${i + 1}</th>${filled}${'<td></td>'.repeat(LETTERS.length - used)}</tr>`;
}).join('');
```
